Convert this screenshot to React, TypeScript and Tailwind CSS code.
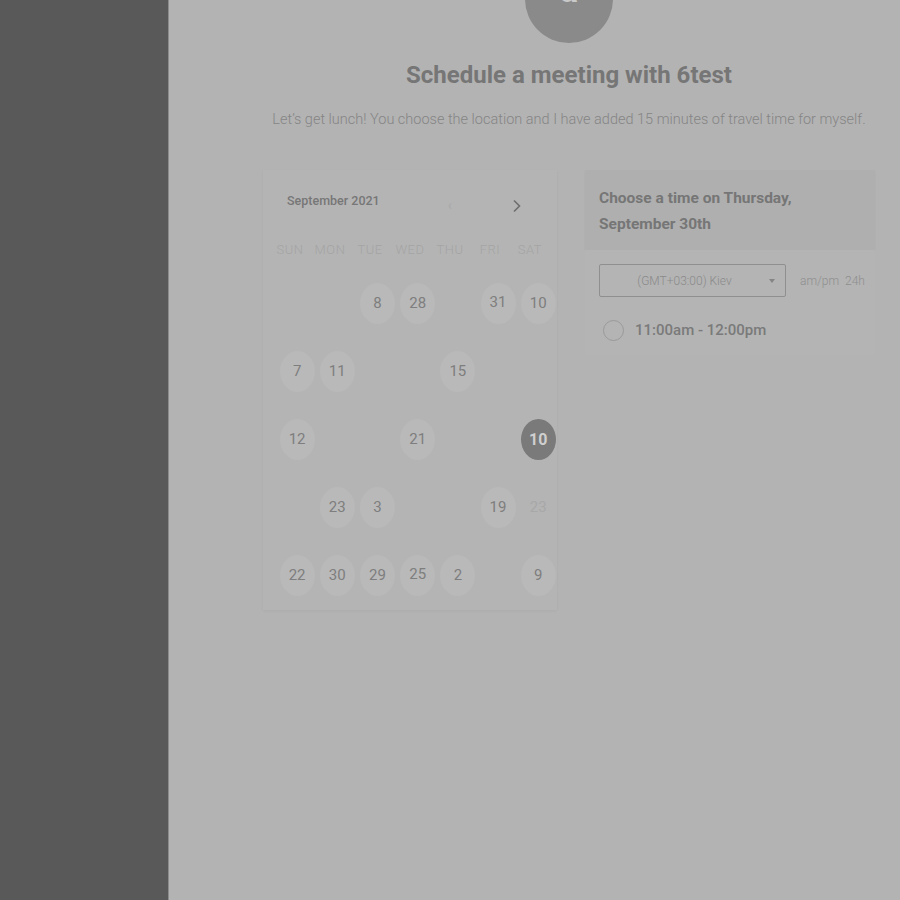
import React from "react";

type Cell = { n?: string; sel?: boolean; faint?: boolean; dy?: number };

const rows: Cell[][] = [
  [{}, {}, { n: "8" }, { n: "28" }, {}, { n: "31", dy: -2 }, { n: "10" }],
  [{ n: "7" }, { n: "11" }, {}, {}, { n: "15" }, {}, {}],
  [{ n: "12" }, {}, {}, { n: "21", dy: -1 }, {}, {}, { n: "10", sel: true }],
  [{}, { n: "23" }, { n: "3" }, {}, {}, { n: "19" }, { n: "23", faint: true }],
  [{ n: "22" }, { n: "30" }, { n: "29" }, { n: "25", dy: -2 }, { n: "2" }, {}, { n: "9" }],
];

const days = ["SUN", "MON", "TUE", "WED", "THU", "FRI", "SAT"];

export default function App() {
  return (
    <div
      className="flex h-[900px] w-[900px] overflow-hidden bg-[#b3b3b3]"
      style={{ fontFamily: "Roboto, 'Liberation Sans', sans-serif" }}
    >
      <div className="h-full w-[169px] shrink-0 border-r border-[#8c8c8c] bg-[#595959]" />
      <div className="relative flex-1">
        <div className="ml-[94px] w-[612px]">
          {/* avatar */}
          <div className="relative mx-auto -mt-[45px] flex h-[88px] w-[88px] items-start justify-center rounded-full bg-[#8a8a8a]">
            <span className="mt-[18px] text-[34px] font-bold leading-none text-[#c9c9c9]">a</span>
          </div>
          <h1 className="mt-[17px] text-center text-[24px] font-bold leading-[30px] text-[#767676]">
            Schedule a meeting with 6test
          </h1>
          <p className="-mx-[20px] mt-[20px] whitespace-nowrap text-center text-[14.5px] font-light leading-[20px] text-[#858585]">
            Let’s get lunch! You choose the location and I have added 15 minutes of travel time for myself.
          </p>

          <div className="mt-[40px] flex items-start">
            {/* calendar */}
            <div className="h-[440px] w-[294px] shrink-0 overflow-hidden bg-[#b4b4b4] shadow-[0_1px_3px_rgba(0,0,0,0.04)]">
              <div className="flex h-[62px] items-center pl-[24px]">
                <span className="text-[12.5px] font-medium text-[#777]">September 2021</span>
                <span className="ml-[68px] mt-[8px] text-[14px] text-[#a9a9a9]">‹</span>
                <svg className="ml-[60px] mt-[10px]" width="10" height="14" viewBox="0 0 10 14">
                  <path d="M2 1.5 L7.5 7 L2 12.5" fill="none" stroke="#6e6e6e" strokeWidth="1.6" />
                </svg>
              </div>
              <div className="ml-[7px] grid h-[36px] grid-cols-[repeat(7,40px)] items-center">
                {days.map((d) => (
                  <span key={d} className="text-center text-[13px] font-light tracking-[0.5px] text-[#a4a4a4]">
                    {d}
                  </span>
                ))}
              </div>
              <div className="ml-[14px] mt-[15px] flex flex-col gap-[27px]">
                {rows.map((r, i) => (
                  <div key={i} className="grid grid-cols-[repeat(7,40.2px)]">
                    {r.map((c, j) => (
                      <div key={j} className="flex h-[41px] items-center justify-center">
                        {c.n ? (
                          <div
                            className={
                              c.sel
                                ? "flex h-[41px] w-[35px] items-center justify-center rounded-[50%] bg-[#7a7a7a] text-[16px] font-bold text-[#cfcfcf]"
                                : c.faint
                                ? "flex h-[41px] w-[35px] items-center justify-center text-[15px] text-[#a8a8a8]"
                                : "flex h-[41px] w-[35px] items-center justify-center rounded-[50%] bg-[#b9b9b9] text-[15px] text-[#7e7e7e]"
                            }
                          >
                            <span style={{ marginTop: c.dy ?? 0 }}>{c.n}</span>
                          </div>
                        ) : null}
                      </div>
                    ))}
                  </div>
                ))}
              </div>
            </div>

            {/* time panel */}
            <div className="ml-[28px] w-[290px] shrink-0">
              <div className="h-[80px] bg-[#afafaf] px-[14px] pt-[15px] shadow-[0_1px_2px_rgba(0,0,0,0.04)]">
                <p className="text-[15.5px] font-bold leading-[26px] text-[#767676]">
                  Choose a time on Thursday,
                  <br />
                  September 30th
                </p>
              </div>
              <div className="h-[105px] bg-[#b4b4b4] px-[14px] pt-[14px]">
                <div className="flex items-center">
                  <div className="relative flex h-[33px] w-[187px] shrink-0 items-center justify-center rounded-[2px] border border-[#8f8f8f] pr-[16px]">
                    <span className="text-[12px] font-light text-[#8a8a8a]">(GMT+03:00) Kiev</span>
                    <span className="absolute right-[10px] top-[14px] h-0 w-0 border-x-[3px] border-t-[4px] border-x-transparent border-t-[#858585]" />
                  </div>
                  <span className="ml-[14px] shrink-0 whitespace-pre text-[12px] font-light text-[#8f8f8f]">am/pm  24h</span>
                </div>
                <div className="mt-[22px] flex items-center pl-[4px]">
                  <span className="h-[21px] w-[21px] rounded-full border border-[#9a9a9a]" />
                  <span className="ml-[11px] text-[15px] font-medium text-[#7a7a7a]">11:00am - 12:00pm</span>
                </div>
              </div>
            </div>
          </div>
        </div>
      </div>
    </div>
  );
}
